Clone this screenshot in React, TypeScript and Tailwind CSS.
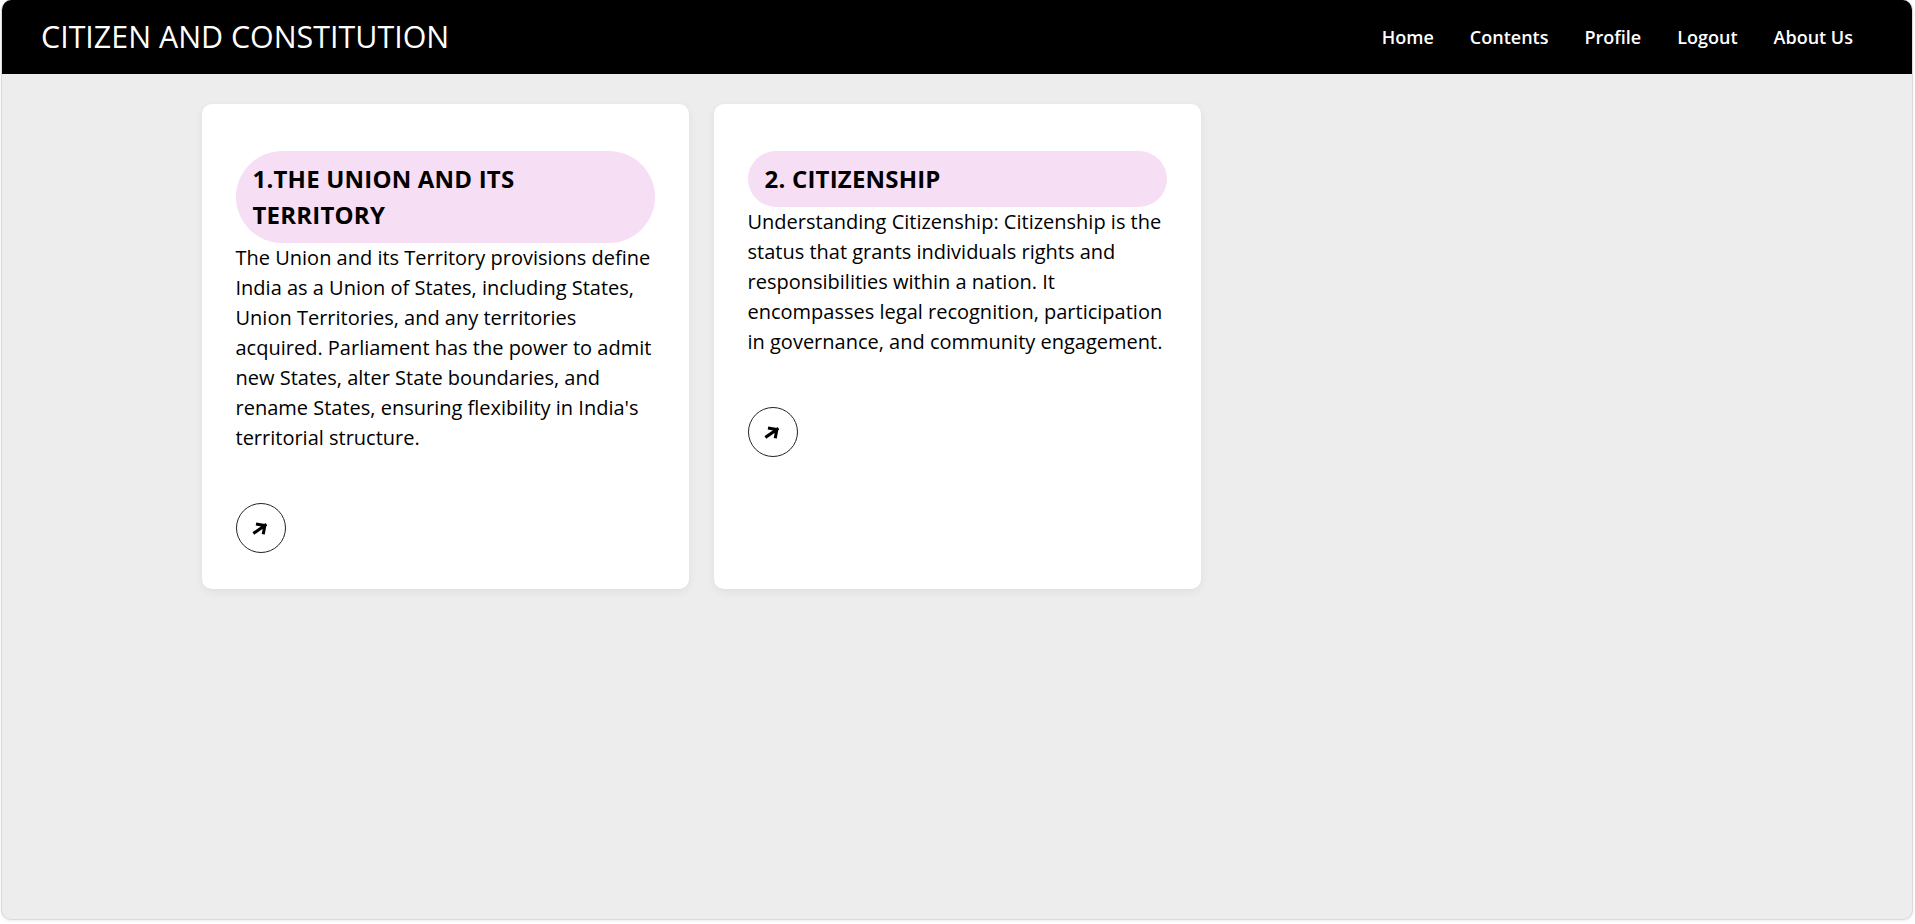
import React from "react";

type Topic = {
  title: string;
  text: string;
};

const topics: Topic[] = [
  {
    title: "1.THE UNION AND ITS TERRITORY",
    text: "The Union and its Territory provisions define India as a Union of States, including States, Union Territories, and any territories acquired. Parliament has the power to admit new States, alter State boundaries, and rename States, ensuring flexibility in India's territorial structure.",
  },
  {
    title: "2. CITIZENSHIP",
    text: "Understanding Citizenship: Citizenship is the status that grants individuals rights and responsibilities within a nation. It encompasses legal recognition, participation in governance, and community engagement.",
  },
];

const links = ["Home", "Contents", "Profile", "Logout", "About Us"];

// arrow pointing up-right, a right arrow tilted by 35 degrees
function TiltedArrow() {
  return (
    <svg width="23" height="23" viewBox="0 0 24 24" fill="none" className="-rotate-[35deg]">
      <path
        d="M4.5 12h13.5M12 6.5l5.5 5.5-5.5 5.5"
        stroke="#000"
        strokeWidth="3.2"
        strokeLinecap="square"
        strokeLinejoin="miter"
      />
    </svg>
  );
}

function TopicCard({ topic }: { topic: Topic }) {
  return (
    <article className="flex flex-col items-start bg-white rounded-[10px] px-[34px] pt-[47px] pb-[36px] shadow-[0_3px_10px_rgba(0,0,0,0.06)]">
      <h2 className="w-full bg-[#f6dff4] rounded-full pl-[17px] pr-[17px] py-[10px] text-[24px] leading-[36px] font-bold text-black tracking-[0.2px]">
        {topic.title}
      </h2>
      <p className="text-[20px] leading-[30px] text-black">{topic.text}</p>
      <button className="mt-[50px] w-[50px] h-[50px] rounded-full border border-[#222] flex items-center justify-center cursor-pointer">
        <TiltedArrow />
      </button>
    </article>
  );
}

export default function App() {
  return (
    <div
      className="min-h-screen bg-white pl-[1px] pr-[2px] pb-[4px]"
      style={{ fontFamily: '"Open Sans", "Noto Sans", sans-serif' }}
    >
      <div className="h-[920px] rounded-[10px] border border-t-0 border-[#dadada] bg-[#ededed] overflow-hidden shadow-[0_1px_3px_rgba(0,0,0,0.08)]">
        {/* Header */}
        <header className="h-[74px] bg-black flex items-center justify-between pl-[39px] pr-[59px]">
          <h1 className="text-[30.4px] text-white font-normal">CITIZEN AND CONSTITUTION</h1>
          <nav className="flex items-center gap-[36px]">
            {links.map((l) => (
              <a key={l} href="#" className="text-[18px] font-semibold text-white">
                {l}
              </a>
            ))}
          </nav>
        </header>

        {/* Topics */}
        <main className="pt-[30px]">
          <div className="w-[1511px] mx-auto grid grid-cols-3 gap-[25px]">
            {topics.map((t) => (
              <TopicCard key={t.title} topic={t} />
            ))}
          </div>
        </main>
      </div>
    </div>
  );
}
